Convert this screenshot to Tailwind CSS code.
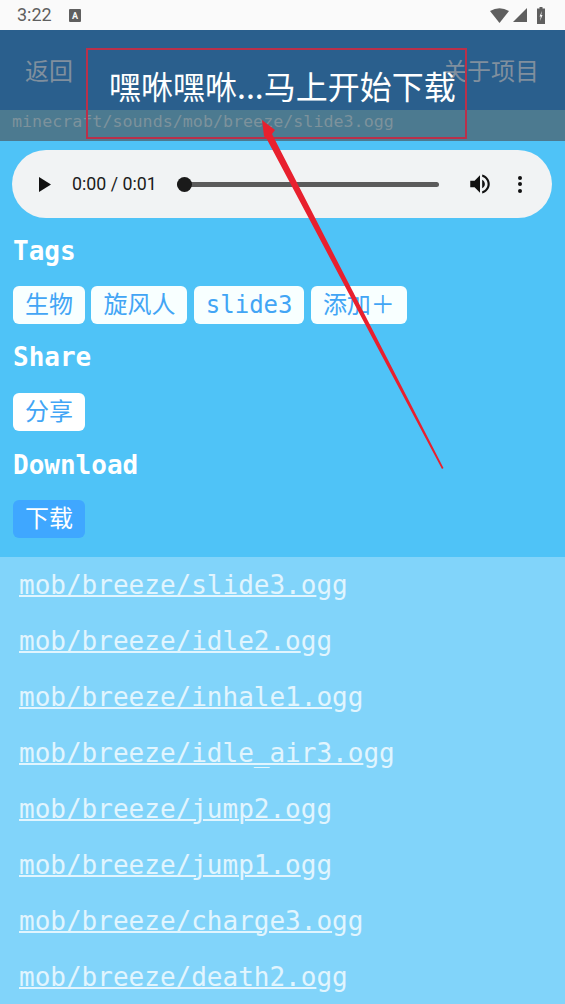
<!DOCTYPE html>
<html lang="en">
<head>
  <meta charset="UTF-8" />
  <meta name="viewport" content="width=device-width, initial-scale=1.0"/>
  <title>Minecraft Sounds</title>
  <script src="https://cdn.jsdelivr.net/npm/@tailwindcss/browser@4"></script>
</head>
<body class="relative h-[1004px] w-[565px] overflow-hidden bg-[#81d4fa] font-['DejaVu_Sans_Mono','Noto_Sans_CJK_SC',monospace]">

  <!-- status bar -->
  <div class="flex h-[30px] items-center justify-between bg-[#fafafa] pl-[17px] pr-[20px] text-[#5f5f5f]">
    <div class="flex items-center gap-[17px]">
      <span class="font-['Roboto',sans-serif] text-[18px] leading-none">3:22</span>
      <svg width="12" height="13" viewBox="0 0 12 13"><rect width="12" height="13" rx="1" fill="#5f5f5f"/><text x="6" y="9.5" text-anchor="middle" font-size="9" font-weight="700" font-family="Roboto" fill="#fafafa">A</text></svg>
    </div>
    <div class="flex items-center">
      <svg width="19" height="15" viewBox="0 0 19 15"><path d="M0 3Q9.5-2.5 19 3L9.5 15Z" fill="#5f5f5f"/></svg>
      <svg class="ml-[4px]" width="14" height="14" viewBox="0 0 14 14"><path d="M14 0V14H0Z" fill="#5f5f5f"/></svg>
      <svg class="ml-[10px]" width="8" height="17" viewBox="0 0 8 17"><path d="M2.5 0H5.5V1.5H8V17H0V1.5H2.5Z" fill="#5f5f5f"/><path d="M5 4L2.5 9.5H3.8L3 14L5.5 8H4.2Z" fill="#fafafa"/></svg>
    </div>
  </div>

  <!-- header, dimmed by the dialog -->
  <div class="flex h-[80px] items-center justify-between bg-[#2a5f8d] pl-[25px] pr-[26px] pt-[3px] text-[24px] text-[#808f9e]">
    <span>返回</span>
    <span>关于项目</span>
  </div>
  <div class="h-[31px] bg-[#4c7a90] pl-[12px] text-[16.7px] leading-[23px] text-[#7d929c]">minecraft/sounds/mob/breeze/slide3.ogg</div>

  <!-- detail panel -->
  <div class="h-[416px] bg-[#4fc3f7] px-[13px] pt-[9px]">
    <div class="-ml-px flex h-[68px] w-[540px] items-center rounded-[34px] bg-[#f1f3f4] font-['Roboto',sans-serif] text-[#1b1b1b]">
      <svg class="ml-[27px]" width="12" height="15" viewBox="0 0 12 15"><path d="M0 0L12 7.5L0 15Z" fill="#111"/></svg>
      <span class="ml-[21px] w-[84px] whitespace-nowrap text-[17.8px] leading-none">0:00 / 0:01</span>
      <div class="relative ml-[21px] h-[5px] w-[262px] rounded-full bg-[#5b5b5b]">
        <div class="absolute left-0 -top-[5px] h-[15px] w-[15px] rounded-full bg-[#1a1a1a]"></div>
      </div>
      <svg class="ml-[28px]" width="26" height="26" viewBox="0 0 24 24"><path d="M3 9v6h4l5 5V4L7 9H3zm13.5 3c0-1.77-1.02-3.29-2.5-4.03v8.05c1.48-.73 2.5-2.25 2.5-4.02zM14 3.23v2.06c2.89.86 5 3.54 5 6.71s-2.11 5.85-5 6.71v2.06c4.01-.91 7-4.49 7-8.77s-2.99-7.86-7-8.77z" fill="#111"/></svg>
      <div class="ml-[25px] flex flex-col gap-[2.5px]">
        <i class="block h-[4px] w-[4px] rounded-full bg-[#111]"></i>
        <i class="block h-[4px] w-[4px] rounded-full bg-[#111]"></i>
        <i class="block h-[4px] w-[4px] rounded-full bg-[#111]"></i>
      </div>
    </div>

    <h2 class="mt-[17px] text-[26px] leading-[32px] font-bold text-white">Tags</h2>
    <div class="mt-[19px] flex gap-[6.4px] text-[24px] text-[#42a5f5]">
      <span class="flex h-[38px] items-center rounded-[6px] bg-[#f8ffff] px-[12px]">生物</span>
      <span class="flex h-[38px] items-center rounded-[6px] bg-[#f8ffff] px-[12px]">旋风人</span>
      <span class="flex h-[38px] items-center rounded-[6px] bg-[#f8ffff] px-[12px]">slide3</span>
      <span class="flex h-[38px] items-center rounded-[6px] bg-[#f8ffff] px-[12px]">添加＋</span>
    </div>

    <h2 class="mt-[17px] text-[26px] leading-[32px] font-bold text-white">Share</h2>
    <div class="mt-[20px] flex text-[24px] text-[#42a5f5]">
      <span class="flex h-[38px] items-center rounded-[6px] bg-white px-[12px]">分享</span>
    </div>

    <h2 class="mt-[18px] text-[26px] leading-[32px] font-bold text-white">Download</h2>
    <div class="mt-[19px] flex text-[24px] text-white">
      <span class="flex h-[38px] items-center rounded-[6px] bg-[#3fa7ff] px-[12px]">下载</span>
    </div>
  </div>

  <!-- sound list: the underline stops before the final gg -->
  <ul class="pl-[19px] text-[26px] leading-[56px] text-[#e1f5fe]">
    <li><span class="underline decoration-2">mob/breeze/slide3.o</span>gg</li>
    <li><span class="underline decoration-2">mob/breeze/idle2.o</span>gg</li>
    <li><span class="underline decoration-2">mob/breeze/inhale1.o</span>gg</li>
    <li><span class="underline decoration-2">mob/breeze/idle_air3.o</span>gg</li>
    <li><span class="underline decoration-2">mob/breeze/jump2.o</span>gg</li>
    <li><span class="underline decoration-2">mob/breeze/jump1.o</span>gg</li>
    <li><span class="underline decoration-2">mob/breeze/charge3.o</span>gg</li>
    <li><span class="underline decoration-2">mob/breeze/death2.o</span>gg</li>
  </ul>

  <!-- toast over the page -->
  <div class="absolute left-[109px] top-[66px] whitespace-nowrap font-['Noto_Sans_CJK_SC',sans-serif] text-[32px] leading-[38px] text-white">嘿咻嘿咻...马上开始下载</div>

  <!-- red annotation box and arrow -->
  <div class="absolute left-[86px] top-[48px] h-[91px] w-[381px] border-2 border-[#b9304a]"></div>
  <svg class="absolute left-0 top-0" width="565" height="1004" viewBox="0 0 565 1004">
    <path d="M443.5 468L272 134L275 130L262 120L264 136L267 139.5L442 469Z" fill="#e8202e"/>
  </svg>
</body>
</html>
